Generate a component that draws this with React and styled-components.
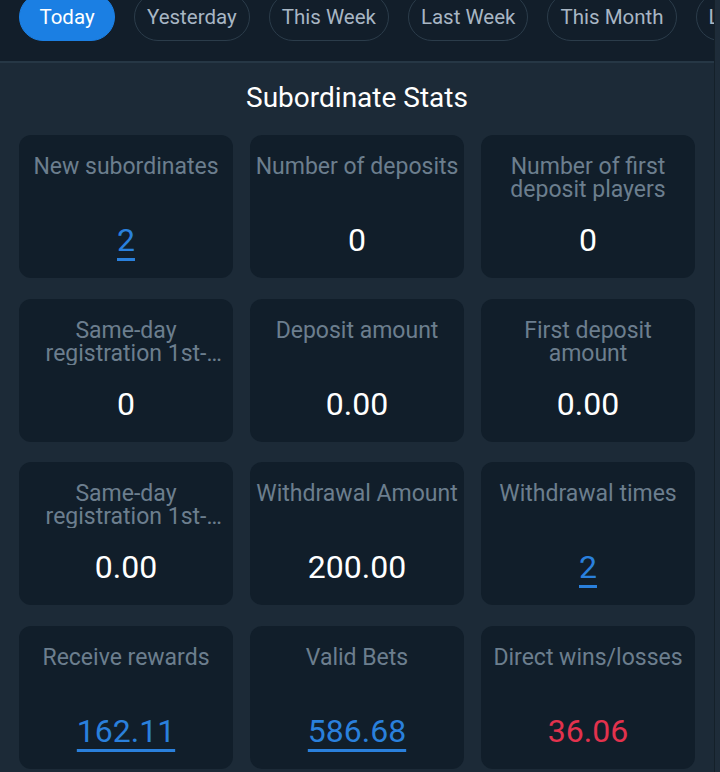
import React from 'react';
import styled, { createGlobalStyle } from 'styled-components';

const GlobalStyle = createGlobalStyle`
  html, body {
    margin: 0;
    padding: 0;
    background: #1c2a37;
  }
  body {
    font-family: Roboto, "Liberation Sans", Arial, sans-serif;
    overflow: hidden;
  }
`;

const Page = styled.div`
  display: flex;
  width: 720px;
  height: 772px;
  overflow: hidden;
`;

const Main = styled.div`
  width: 714px;
  flex: none;
  display: flex;
  flex-direction: column;
`;

const SideStrip = styled.div`
  flex: 1;
  background: #1e2c39;
  border-left: 1px solid #142029;
`;

const TabBar = styled.div`
  height: 63px;
  flex: none;
  display: flex;
  align-items: flex-end;
  gap: 19px;
  padding: 0 0 20px 19px;
  box-sizing: border-box;
  background: #121e2a;
  border-bottom: 2px solid #263745;
  overflow: hidden;
`;

const Tab = styled.div`
  flex: none;
  height: 48px;
  min-width: 96px;
  box-sizing: border-box;
  padding: 0 12px;
  border-radius: 24px;
  display: flex;
  align-items: center;
  justify-content: center;
  font-size: 20.5px;
  color: ${p => (p.$active ? '#ffffff' : '#a8b6c4')};
  background: ${p => (p.$active ? '#1b7fe3' : 'transparent')};
  border: 1px solid ${p => (p.$active ? '#1b7fe3' : '#2b3c4a')};
`;

const Panel = styled.section`
  flex: 1;
  padding: 18px 19px 0;
`;

const Title = styled.h2`
  margin: 0 0 20px;
  text-align: center;
  font-size: 28px;
  line-height: 34px;
  font-weight: 400;
  color: #ffffff;
`;

const Grid = styled.div`
  display: grid;
  grid-template-columns: repeat(3, 1fr);
  column-gap: 17px;
  row-gap: 20.6px;
`;

const Card = styled.div`
  height: 143px;
  box-sizing: border-box;
  padding: 20px 5px 0;
  background: #111e2a;
  border-radius: 12px;
  text-align: center;
`;

const Label = styled.div`
  height: 46px;
  font-size: 23px;
  line-height: 23px;
  color: #6c7e8e;
  display: -webkit-box;
  -webkit-box-orient: vertical;
  -webkit-line-clamp: 2;
  overflow: hidden;
`;

const colors = {
  plain: '#ffffff',
  link: '#2a80dc',
  loss: '#e3324d',
};

const Value = styled.div`
  margin-top: 20px;
  font-size: 32px;
  line-height: 38px;
  color: ${p => colors[p.$tone]};
  text-decoration: ${p => (p.$tone === 'link' ? 'underline' : 'none')};
  text-decoration-thickness: 3px;
  text-underline-offset: 7px;
`;

const tabs = ['Today', 'Yesterday', 'This Week', 'Last Week', 'This Month', 'Last Month'];

const stats = [
  { label: 'New subordinates', value: '2', tone: 'link' },
  { label: 'Number of deposits', value: '0', tone: 'plain' },
  { label: 'Number of first deposit players', value: '0', tone: 'plain' },
  { label: 'Same-day registration 1st-time depositors', value: '0', tone: 'plain' },
  { label: 'Deposit amount', value: '0.00', tone: 'plain' },
  { label: 'First deposit amount', value: '0.00', tone: 'plain' },
  { label: 'Same-day registration 1st-time deposit amount', value: '0.00', tone: 'plain' },
  { label: 'Withdrawal Amount', value: '200.00', tone: 'plain' },
  { label: 'Withdrawal times', value: '2', tone: 'link' },
  { label: 'Receive rewards', value: '162.11', tone: 'link' },
  { label: 'Valid Bets', value: '586.68', tone: 'link' },
  { label: 'Direct wins/losses', value: '36.06', tone: 'loss' },
];

export default function App() {
  return (
    <Page>
      <GlobalStyle />
      <Main>
        <TabBar>
          {tabs.map((t, i) => (
            <Tab key={t} $active={i === 0}>{t}</Tab>
          ))}
        </TabBar>
        <Panel>
          <Title>Subordinate Stats</Title>
          <Grid>
            {stats.map(s => (
              <Card key={s.label}>
                <Label>{s.label}</Label>
                <Value $tone={s.tone}>{s.value}</Value>
              </Card>
            ))}
          </Grid>
        </Panel>
      </Main>
      <SideStrip />
    </Page>
  );
}
